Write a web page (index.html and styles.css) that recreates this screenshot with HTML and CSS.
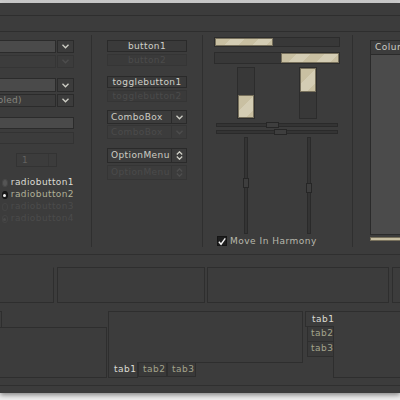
FILE: index.html
```html
<!DOCTYPE html>
<html lang="en">
<head>
    <meta charset="UTF-8">
    <title>Widget Factory</title>
    <link rel="stylesheet" href="styles.css">
</head>
<body>
    <div class="window">
        <div class="menubar"></div>
        <div class="toolbar"></div>

        <div class="main">
            <!-- entries, spin, radios -->
            <div class="col col-entries">
                <div class="combo">
                    <span class="field"></span>
                    <span class="arrow"><svg width="7" height="5" viewBox="0 0 7 5"><polyline points="0.5,0.8 3.5,3.8 6.5,0.8"/></svg></span>
                </div>
                <div class="combo off">
                    <span class="field"></span>
                    <span class="arrow"><svg width="7" height="5" viewBox="0 0 7 5"><polyline points="0.5,0.8 3.5,3.8 6.5,0.8"/></svg></span>
                </div>
                <div class="combo gap">
                    <span class="field"></span>
                    <span class="arrow"><svg width="7" height="5" viewBox="0 0 7 5"><polyline points="0.5,0.8 3.5,3.8 6.5,0.8"/></svg></span>
                </div>
                <div class="combo plain">
                    <span class="field">(disabled)</span>
                    <span class="arrow"><svg width="7" height="5" viewBox="0 0 7 5"><polyline points="0.5,0.8 3.5,3.8 6.5,0.8"/></svg></span>
                </div>
                <div class="entry"></div>
                <div class="entry off"></div>
                <div class="spin">
                    <span>1</span>
                    <span class="spin-arrows"></span>
                </div>
                <div class="radios">
                    <div class="radio"><span class="dot"></span>radiobutton1</div>
                    <div class="radio checked"><span class="dot"></span>radiobutton2</div>
                    <div class="radio off"><span class="dot"></span>radiobutton3</div>
                    <div class="radio off checked"><span class="dot"></span>radiobutton4</div>
                </div>
            </div>

            <div class="vsep"></div>

            <!-- buttons -->
            <div class="col col-buttons">
                <div class="btn">button1</div>
                <div class="btn off">button2</div>
                <div class="btn gap">togglebutton1</div>
                <div class="btn off">togglebutton2</div>
                <div class="cbox">
                    <span class="label">ComboBox</span>
                    <span class="arrow"><svg width="7" height="5" viewBox="0 0 7 5"><polyline points="0.5,0.8 3.5,3.8 6.5,0.8"/></svg></span>
                </div>
                <div class="cbox off">
                    <span class="label">ComboBox</span>
                    <span class="arrow"><svg width="7" height="5" viewBox="0 0 7 5"><polyline points="0.5,0.8 3.5,3.8 6.5,0.8"/></svg></span>
                </div>
                <div class="omenu">
                    <span class="label">OptionMenu</span>
                    <span class="arrow"><svg width="7" height="9" viewBox="0 0 7 9"><polyline points="0.8,3.5 3.5,0.8 6.2,3.5"/><polyline points="0.8,5.5 3.5,8.2 6.2,5.5"/></svg></span>
                </div>
                <div class="omenu off">
                    <span class="label">OptionMenu</span>
                    <span class="arrow"><svg width="7" height="9" viewBox="0 0 7 9"><polyline points="0.8,3.5 3.5,0.8 6.2,3.5"/><polyline points="0.8,5.5 3.5,8.2 6.2,5.5"/></svg></span>
                </div>
            </div>

            <div class="vsep sep2"></div>

            <!-- progress bars and scales -->
            <div class="col col-ranges">
                <div class="pbar"><div class="fill" style="width: 47%"></div></div>
                <div class="pbar right"><div class="fill" style="width: 47%"></div></div>
                <div class="vbars">
                    <div class="vbar bottom"><div class="fill" style="height: 46%"></div></div>
                    <div class="vbar"><div class="fill" style="height: 47%"></div></div>
                </div>
                <div class="hscale"><div class="trough"><span class="slider" style="margin-left: 49px"></span></div></div>
                <div class="hscale"><div class="trough"><span class="slider" style="margin-left: 57px"></span></div></div>
                <div class="vscales">
                    <div class="vtrough"><span class="slider" style="margin-top: 40px"></span></div>
                    <div class="vtrough"><span class="slider" style="margin-top: 45px"></span></div>
                </div>
                <div class="check">
                    <span class="box"><svg width="9" height="9" viewBox="0 0 9 9"><polyline points="1,4.8 3.4,7.6 8.2,1"/></svg></span>
                    Move In Harmony
                </div>
            </div>

            <div class="vsep sep3"></div>

            <!-- tree view -->
            <div class="col col-tree">
                <div class="tree">
                    <div class="tree-head">Column</div>
                    <div class="tree-body"></div>
                </div>
                <div class="hscroll"></div>
            </div>
        </div>

        <div class="frames">
            <div class="frame f1"></div>
            <div class="frame f2"></div>
            <div class="frame f3"></div>
            <div class="frame f4"></div>
        </div>

        <div class="notebooks">
            <div class="nb nb-top">
                <div class="tabs"><span class="tab"></span></div>
                <div class="page"></div>
            </div>
            <div class="nb nb-bottom">
                <div class="page"></div>
                <div class="tabs">
                    <span class="tab active">tab1</span>
                    <span class="tab">tab2</span>
                    <span class="tab">tab3</span>
                </div>
            </div>
            <div class="nb nb-left">
                <div class="tabs">
                    <span class="tab active">tab1</span>
                    <span class="tab">tab2</span>
                    <span class="tab">tab3</span>
                    <span class="tab-fill"></span>
                </div>
                <div class="page"></div>
            </div>
        </div>

        <div class="statusline"></div>
    </div>
</body>
</html>
```

FILE: styles.css
```css
* {
    margin: 0;
    padding: 0;
    box-sizing: border-box;
}

body {
    background: linear-gradient(#c8c8c8 0, #d8d8d8 3px, #efefef 3px);
    font-family: "DejaVu Sans", "Liberation Sans", sans-serif;
    font-size: 9px;
    color: #cdcdc4;
    overflow: hidden;
    height: 400px;
}

.window {
    margin-top: 3px;
    height: 390px;
    background: #3c3c3c;
    box-shadow: 0 2px 5px rgba(0, 0, 0, 0.45);
    overflow: hidden;
}

.menubar {
    height: 13px;
    border-bottom: 1px solid #2e2e2e;
}

.toolbar {
    height: 16px;
    border-bottom: 1px solid #2e2e2e;
}

.main {
    display: flex;
    align-items: flex-start;
    height: 222px;
}

.col {
    display: flex;
    flex-direction: column;
    flex-shrink: 0;
}

.vsep {
    flex-shrink: 0;
    width: 1px;
    height: 212px;
    margin: 3px 0 0 17px;
    background: #2f2f2f;
}

.sep2 {
    margin-left: 15px;
}

.sep3 {
    margin-left: 12px;
}

svg polyline {
    fill: none;
    stroke: #cfcfc6;
    stroke-width: 1.3;
}

/* column 1 */
.col-entries {
    margin-left: -30px;
    width: 104px;
    padding-top: 8px;
}

.combo {
    display: flex;
    height: 13px;
    margin-bottom: 2px;
}

.combo.gap {
    height: 14px;
    margin-top: 8px;
}

.combo .field {
    flex: 1;
    background: #4a4a4a;
    border: 1px solid #2b2b2b;
    padding-left: 3px;
    line-height: 11px;
    color: #86867f;
    letter-spacing: 0.3px;
}

.combo .arrow,
.cbox .arrow,
.omenu .arrow {
    display: flex;
    align-items: center;
    justify-content: center;
    width: 17px;
    border: 1px solid #2b2b2b;
    margin-left: 1px;
}

.combo.off .field,
.combo.plain .field {
    background: #3c3c3c;
}

.combo.off .arrow {
    border-color: #353535;
}

.combo.off .field {
    border-color: #353535;
}

.combo.off polyline,
.cbox.off polyline,
.omenu.off polyline {
    stroke: #4e4e4e;
}

.entry {
    height: 12px;
    margin-top: 8px;
    background: #4a4a4a;
    border: 1px solid #2b2b2b;
}

.entry.off {
    margin-top: 3px;
    background: #3c3c3c;
    border-color: #333;
}

.spin {
    display: flex;
    justify-content: space-between;
    width: 41px;
    height: 14px;
    margin: 9px 0 0 46px;
    border: 1px solid #333;
    padding-left: 5px;
    line-height: 12px;
    color: #626260;
}

.spin-arrows {
    width: 8px;
    border-left: 1px solid #363636;
}

.radios {
    margin: 9px 0 0 32px;
}

.radio {
    display: flex;
    align-items: center;
    height: 12px;
    gap: 3px;
    color: #dcdcd4;
    letter-spacing: 0.4px;
}

.radio .dot {
    display: flex;
    align-items: center;
    justify-content: center;
    width: 8px;
    height: 8px;
    border-radius: 50%;
    background: #555;
    border: 1px solid #474747;
    margin-top: 2px;
}

.radio.checked {
    color: #b0b098;
}

.radio.checked .dot {
    background: #1c1c1c;
    border-color: #151515;
}

.radio.checked .dot::after {
    content: "";
    width: 3px;
    height: 3px;
    border-radius: 50%;
    background: #f0f0f0;
}

.radio.off {
    color: #4b4b4b;
}

.radio.off .dot {
    background: #3c3c3c;
    border-color: #444;
}

.radio.off.checked .dot::after {
    background: #4a4a4a;
}

/* column 2 */
.col-buttons {
    margin-left: 15px;
    width: 80px;
    padding-top: 8px;
}

.btn {
    height: 12px;
    margin-bottom: 2px;
    border: 1px solid #2a2a2a;
    background: #3a3a3a;
    text-align: center;
    line-height: 10px;
    letter-spacing: 0.4px;
    color: #d0d0c8;
}

.btn.gap {
    margin-top: 8px;
}

.btn.off {
    color: #4b4b4b;
    border-color: #353535;
}

.cbox,
.omenu {
    display: flex;
    height: 14px;
    margin-top: 6px;
    border: 1px solid #2a2a2a;
}

.cbox .label,
.omenu .label {
    flex: 1;
    padding-left: 3px;
    line-height: 12px;
    letter-spacing: 0.4px;
}

.cbox .arrow,
.omenu .arrow {
    width: 15px;
    border: none;
    border-left: 1px solid #2a2a2a;
}

.cbox.off {
    margin-top: 1px;
}

.omenu {
    height: 15px;
    margin-top: 9px;
}

.omenu.off {
    margin-top: 2px;
}

.cbox.off,
.omenu.off {
    color: #4b4b4b;
    border-color: #353535;
}

.cbox.off .arrow,
.omenu.off .arrow {
    border-color: #353535;
}

/* column 3 */
.col-ranges {
    margin-left: 11px;
    width: 126px;
    padding-top: 5px;
}

.pbar {
    display: flex;
    height: 10px;
    border: 1px solid #2c2c2c;
    background: #383838;
}

.pbar.right {
    justify-content: flex-end;
    height: 12px;
    margin-top: 5px;
}

.fill {
    background: repeating-linear-gradient(135deg, #c9c0a2 0, #c9c0a2 10px, #d4cdb4 10px, #d4cdb4 20px);
    border: 1px solid #77705c;
}

.vbars {
    display: flex;
    height: 52px;
    margin-top: 3px;
}

.vbar {
    display: flex;
    flex-direction: column;
    width: 18px;
    margin-left: 23px;
    border: 1px solid #2c2c2c;
    background: #383838;
}

.vbar + .vbar {
    margin-left: 44px;
}

.vbar.bottom {
    justify-content: flex-end;
}

.hscale {
    display: flex;
    align-items: center;
    height: 5px;
    margin-top: 3px;
    padding: 0 0 0 2px;
}

.hscale + .hscale {
    margin-top: 2px;
}

.trough {
    display: flex;
    align-items: center;
    width: 122px;
    height: 4px;
    border: 1px solid #2a2a2a;
    background: #343434;
}

.slider {
    flex-shrink: 0;
    width: 13px;
    height: 6px;
    border: 1px solid #262626;
    background: #3e3e3e;
}

.vscales {
    display: flex;
    height: 97px;
    margin-top: 3px;
}

.vtrough {
    display: flex;
    flex-direction: column;
    align-items: center;
    width: 4px;
    margin-left: 30px;
    border: 1px solid #2a2a2a;
    background: #343434;
}

.vtrough + .vtrough {
    margin-left: 59px;
}

.vtrough .slider {
    width: 6px;
    height: 10px;
}

.check {
    display: flex;
    align-items: center;
    gap: 3px;
    margin: 2px 0 0 3px;
    height: 10px;
    letter-spacing: 0.5px;
    color: #b8b8ac;
}

.check .box {
    display: flex;
    align-items: center;
    justify-content: center;
    width: 10px;
    height: 10px;
    background: #1e1e1e;
    border: 1px solid #151515;
}

.check polyline {
    stroke: #f2f2f2;
    stroke-width: 1.6;
}

/* tree view */
.col-tree {
    margin-left: 17px;
    padding-top: 8px;
    width: 60px;
}

.tree {
    display: flex;
    flex-direction: column;
    height: 195px;
    border: 1px solid #2a2a2a;
}

.tree-head {
    height: 14px;
    padding-left: 4px;
    line-height: 13px;
    letter-spacing: 0.5px;
    border-bottom: 1px solid #2a2a2a;
    white-space: nowrap;
}

.tree-body {
    flex: 1;
    background: #4b4b4b;
}

.hscroll {
    height: 4px;
    margin-top: 2px;
    background: #c8bfa2;
    border: 1px solid #77705c;
}

/* frames */
.frames {
    display: flex;
    height: 49px;
    padding-top: 12px;
    border-top: 1px solid #2f2f2f;
}

.frame {
    flex-shrink: 0;
    height: 36px;
    border: 1px solid #2e2e2e;
}

.f1 {
    margin-left: -20px;
    width: 74px;
    border-top-color: #3c3c3c;
}

.f2 {
    margin-left: 3px;
    width: 148px;
}

.f3 {
    margin-left: 2px;
    width: 182px;
}

.f4 {
    margin-left: 3px;
    width: 40px;
}

/* notebooks */
.notebooks {
    display: flex;
    align-items: flex-start;
    height: 75px;
    margin-top: 8px;
    border-bottom: 1px solid #2f2f2f;
}

.nb {
    display: flex;
    flex-shrink: 0;
}

.tab {
    letter-spacing: 0.5px;
    color: #a4a48c;
}

.tab.active {
    color: #dcdcd4;
}

.nb-top {
    flex-direction: column;
    margin-left: -40px;
    width: 147px;
}

.nb-top .tabs {
    height: 16px;
}

.nb-top .tab {
    display: block;
    width: 42px;
    height: 17px;
    border: 1px solid #2e2e2e;
    border-bottom: none;
}

.nb-top .page {
    height: 51px;
    border: 1px solid #2e2e2e;
}

.nb-bottom {
    flex-direction: column;
    margin-left: 1px;
    width: 195px;
}

.nb-bottom .page {
    height: 52px;
    border: 1px solid #2e2e2e;
}

.nb-bottom .tabs {
    display: flex;
    align-items: flex-start;
}

.nb-bottom .tab {
    width: 29px;
    height: 14px;
    padding-left: 4px;
    line-height: 12px;
    border: 1px solid #2e2e2e;
    border-top: none;
    background: #393939;
}

.nb-bottom .tab.active {
    width: 30px;
    height: 16px;
    padding-left: 5px;
    line-height: 14px;
    background: #3c3c3c;
    margin-top: -1px;
}

.nb-left {
    margin-left: 2px;
    width: 120px;
}

.nb-left .tabs {
    display: flex;
    flex-direction: column;
    align-items: flex-end;
    width: 29px;
}

.nb-left .tab {
    width: 27px;
    height: 15px;
    padding-left: 3px;
    line-height: 13px;
    border: 1px solid #2e2e2e;
    border-top: none;
    background: #393939;
}

.nb-left .tab.active {
    width: 29px;
    height: 16px;
    padding-left: 6px;
    line-height: 15px;
    border-top: 1px solid #2e2e2e;
    border-right: none;
    background: #3c3c3c;
}

.nb-left .tab-fill {
    width: 1px;
    height: 21px;
    background: #2e2e2e;
}

.nb-left .page {
    flex: 1;
    height: 67px;
    border-top: 1px solid #2e2e2e;
    border-bottom: 1px solid #2e2e2e;
}
```
